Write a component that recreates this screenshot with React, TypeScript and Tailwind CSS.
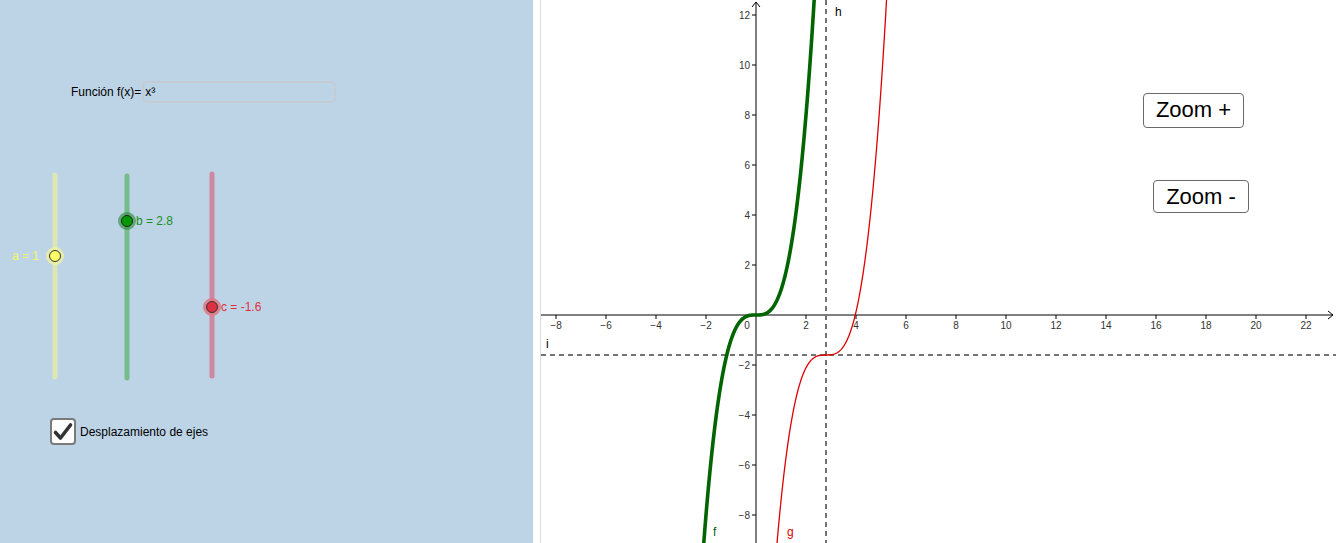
import React from "react";

const OX = 215;
const OY = 315;
const S = 25;
const X = (x: number) => OX + S * x;
const Y = (y: number) => OY - S * y;

function curve(fn: (x: number) => number) {
  const pts: string[] = [];
  for (let x = -9; x <= 24; x += 0.01) {
    const y = fn(x);
    if (Math.abs(y) < 30) pts.push(`${X(x).toFixed(2)},${Y(y).toFixed(2)}`);
  }
  return "M" + pts.join(" L");
}

function Graph() {
  const xs: number[] = [];
  for (let v = -8; v <= 22; v += 2) if (v !== 0) xs.push(v);
  const ys = [12, 10, 8, 6, 4, 2, -2, -4, -6, -8];
  const fmt = (v: number) => (v < 0 ? "\u2212" + Math.abs(v) : String(v));
  return (
    <svg width={795} height={543} className="block" style={{ fontFamily: '"Liberation Sans", Arial, sans-serif' }}>
      <line x1={0} y1={OY} x2={792} y2={OY} stroke="#000" strokeWidth={1} />
      <path d={`M787,${OY - 4} L792,${OY} L787,${OY + 4}`} fill="none" stroke="#000" strokeWidth={1} />
      <line x1={OX} y1={543} x2={OX} y2={2} stroke="#000" strokeWidth={1} />
      <path d={`M${OX - 4},7 L${OX},2 L${OX + 4},7`} fill="none" stroke="#000" strokeWidth={1} />
      {xs.map((v) => (
        <g key={"x" + v}>
          <line x1={X(v)} y1={OY} x2={X(v)} y2={OY + 4} stroke="#000" strokeWidth={1} />
          <text x={X(v)} y={OY + 14} fontSize={10} fill="#333" textAnchor="middle">
            {fmt(v)}
          </text>
        </g>
      ))}
      <text x={OX - 9} y={OY + 14} fontSize={10} fill="#333" textAnchor="middle">0</text>
      {ys.map((v) => (
        <g key={"y" + v}>
          <line x1={OX - 4} y1={Y(v)} x2={OX} y2={Y(v)} stroke="#000" strokeWidth={1} />
          <text x={OX - 6} y={Y(v) + 3.5} fontSize={10} fill="#333" textAnchor="end">
            {fmt(v)}
          </text>
        </g>
      ))}
      <line x1={X(2.8)} y1={0} x2={X(2.8)} y2={543} stroke="#737373" strokeWidth={2} strokeDasharray="5 4" />
      <line x1={0} y1={Y(-1.6)} x2={795} y2={Y(-1.6)} stroke="#737373" strokeWidth={2} strokeDasharray="5 4" />
      <path d={curve((x) => Math.pow(x - 2.8, 3) - 1.6)} fill="none" stroke="#dd0000" strokeWidth={1.3} />
      <path d={curve((x) => x * x * x)} fill="none" stroke="#006400" strokeWidth={3.6} />
      <text x={294} y={16} fontSize={12} fill="#000">h</text>
      <text x={5} y={348} fontSize={12} fill="#000">i</text>
      <text x={172} y={536} fontSize={12} fill="#006400">f</text>
      <text x={246} y={536} fontSize={12} fill="#dd0000">g</text>
    </svg>
  );
}

function Sliders() {
  const ff = '"Liberation Sans", Arial, sans-serif';
  return (
    <svg width={533} height={230} className="block" style={{ fontFamily: ff }}>
      <line x1={55} y1={15} x2={55} y2={217} stroke="#dde7b4" strokeWidth={5} strokeLinecap="round" />
      <circle cx={55} cy={96} r={9} fill="#f4f59a" opacity={0.7} />
      <circle cx={55} cy={96} r={5.5} fill="#ffff66" stroke="#333" strokeWidth={1} />
      <text x={12} y={100} fontSize={12} fill="#f5f562">a = 1</text>
      <line x1={127} y1={16} x2={127} y2={218} stroke="#78bb8a" strokeWidth={5} strokeLinecap="round" />
      <circle cx={127} cy={61} r={9} fill="#2f8f3f" opacity={0.65} />
      <circle cx={127} cy={61} r={5.5} fill="#009900" stroke="#222" strokeWidth={1} />
      <text x={136} y={65} fontSize={12} fill="#1a8f1a">b = 2.8</text>
      <line x1={212} y1={14} x2={212} y2={216} stroke="#ce889f" strokeWidth={5} strokeLinecap="round" />
      <circle cx={212} cy={147} r={9} fill="#e07a86" opacity={0.9} />
      <circle cx={212} cy={147} r={5.5} fill="#dd3040" stroke="#333" strokeWidth={1} />
      <text x={221} y={151} fontSize={12} fill="#e0303a">c = -1.6</text>
    </svg>
  );
}

export default function App() {
  return (
    <div
      className="flex w-[1336px] h-[543px] overflow-hidden bg-white"
      style={{ fontFamily: '"Liberation Sans", Arial, sans-serif' }}
    >
      <div className="w-[533px] h-full bg-[#bdd4e7] flex flex-col shrink-0">
        <div className="mt-[81px] h-[22px] flex items-center pl-[71px]">
          <span className="text-[12px] text-black leading-none">Función f(x)=</span>
          <div className="ml-[1px] w-[194px] h-[22px] border-2 border-[#c3ccd4] rounded-[5px] flex items-center pl-[1px]">
            <span className="text-[12px] text-black leading-none">x³</span>
          </div>
        </div>
        <div className="mt-[57px]">
          <Sliders />
        </div>
        <div className="mt-[28px] pl-[50px] flex items-center gap-[4px]">
          <div className="w-[26px] h-[27px] bg-white border-2 border-[#7a7a7a] rounded-[4px] flex items-center justify-center">
            <svg width={22} height={22} viewBox="0 0 22 22">
              <path d="M3.5 11.5 L8.5 17 L18.5 4" fill="none" stroke="#333" strokeWidth={3.6} strokeLinecap="round" strokeLinejoin="round" />
            </svg>
          </div>
          <span className="text-[12px] text-black">Desplazamiento de ejes</span>
        </div>
      </div>
      <div className="w-[7px] h-full bg-white shrink-0" />
      <div className="w-[1px] h-full bg-[#dcdcdc] shrink-0" />
      <div className="relative flex-1 h-full overflow-hidden">
        <Graph />
        <div className="absolute left-[602px] top-[93px] w-[101px] h-[35px] pb-[2px] bg-white border-[1.5px] border-[#6a6a6a] rounded-[4px] flex items-center justify-center text-[22px] text-black leading-none">
          Zoom +
        </div>
        <div className="absolute left-[612px] top-[180px] w-[96px] h-[33px] bg-white border-[1.5px] border-[#6a6a6a] rounded-[4px] flex items-center justify-center text-[22px] text-black leading-none">
          Zoom -
        </div>
      </div>
    </div>
  );
}
